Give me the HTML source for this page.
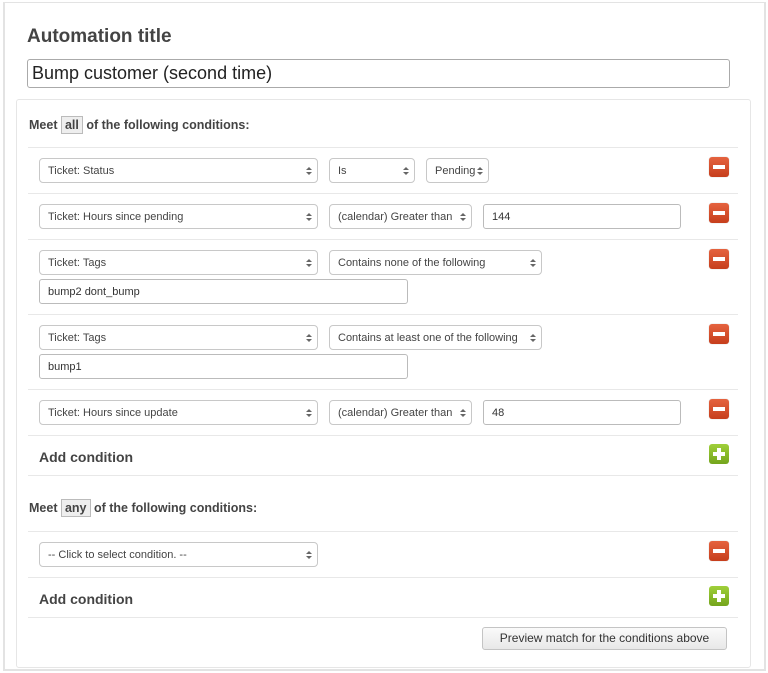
<!DOCTYPE html>
<html><head><style>
*{box-sizing:border-box;margin:0;padding:0}
body{width:768px;height:673px;background:#fff;position:relative;font-family:"Liberation Sans",Arial,sans-serif;color:#444;overflow:hidden}
.a{position:absolute}
.outer{left:3px;top:2px;width:763px;height:669px;border:2px solid #e3e3e3;border-top-width:1px}
.panel{left:16px;top:99px;width:735px;height:569px;border:1px solid #e6e6e6;border-radius:3px}
.ln{left:28px;width:710px;height:1px;background:#e8e8e8}
.sel{height:25px;border:1px solid #c8c8c8;border-radius:4px;font-size:11px;display:flex;align-items:center;padding-left:8px;padding-top:1px;color:#444;background:#fff;white-space:nowrap;overflow:hidden}
.sel:after{content:"";position:absolute;right:5px;top:8px;border:3px solid transparent;border-bottom:3px solid #666;border-top:0}
.sel:before{content:"";position:absolute;right:5px;top:13px;border:3px solid transparent;border-top:3px solid #666;border-bottom:0}
.inp{height:25px;border:1px solid #bbb;border-radius:3px;font-size:11px;display:flex;align-items:center;padding-left:8px;padding-top:1px;color:#333}
.minus{width:20px;height:20px;border-radius:3px;background:linear-gradient(#e5633f,#c63e1c);box-shadow:0 0 1px #bbb}
.minus:after{content:"";position:absolute;left:4px;top:8px;width:12px;height:4px;background:#fff}
.plus{width:20px;height:20px;border-radius:3px;background:linear-gradient(#9fcf3a,#74a51d)}
.plus:after{content:"";position:absolute;left:4px;top:8px;width:12px;height:4px;background:#fff}
.plus:before{content:"";position:absolute;left:8px;top:4px;width:4px;height:12px;background:#fff}
.b{font-weight:bold;font-size:12.5px;color:#444}
.tag{border:1px solid #bbb;background:#eee;padding:1px 3px}
.ac{font-weight:bold;font-size:14px;color:#444}
</style></head><body>
<div class="a outer"></div>
<div class="a" style="left:27px;top:26px;font-size:19px;font-weight:bold;color:#444">Automation title</div>
<div class="a" style="left:27px;top:59px;width:703px;height:29px;border:1px solid #aaa;border-radius:3px;font-size:18px;line-height:27px;padding-left:4px;color:#222">Bump customer (second time)</div>
<div class="a panel"></div>
<div class="a b" style="left:29px;top:116px;line-height:18px">Meet <span class="tag">all</span> of the following conditions:</div>
<div class="a ln" style="top:147px"></div>
<div class="a sel" style="left:39px;top:158px;width:279px">Ticket: Status</div>
<div class="a sel" style="left:329px;top:158px;width:86px">Is</div>
<div class="a sel" style="left:426px;top:158px;width:63px">Pending</div>
<div class="a minus" style="left:709px;top:157px"></div>
<div class="a ln" style="top:193px"></div>
<div class="a sel" style="left:39px;top:204px;width:279px">Ticket: Hours since pending</div>
<div class="a sel" style="left:329px;top:204px;width:143px">(calendar) Greater than</div>
<div class="a inp" style="left:483px;top:204px;width:198px">144</div>
<div class="a minus" style="left:709px;top:203px"></div>
<div class="a ln" style="top:239px"></div>
<div class="a sel" style="left:39px;top:250px;width:279px">Ticket: Tags</div>
<div class="a sel" style="left:329px;top:250px;width:213px">Contains none of the following</div>
<div class="a inp" style="left:39px;top:279px;width:369px">bump2 dont_bump</div>
<div class="a minus" style="left:709px;top:249px"></div>
<div class="a ln" style="top:314px"></div>
<div class="a sel" style="left:39px;top:325px;width:279px">Ticket: Tags</div>
<div class="a sel" style="left:329px;top:325px;width:213px">Contains at least one of the following</div>
<div class="a inp" style="left:39px;top:354px;width:369px">bump1</div>
<div class="a minus" style="left:709px;top:324px"></div>
<div class="a ln" style="top:389px"></div>
<div class="a sel" style="left:39px;top:400px;width:279px">Ticket: Hours since update</div>
<div class="a sel" style="left:329px;top:400px;width:143px">(calendar) Greater than</div>
<div class="a inp" style="left:483px;top:400px;width:198px">48</div>
<div class="a minus" style="left:709px;top:399px"></div>
<div class="a ln" style="top:435px"></div>
<div class="a ac" style="left:39px;top:449px">Add condition</div>
<div class="a plus" style="left:709px;top:444px"></div>
<div class="a ln" style="top:475px"></div>
<div class="a b" style="left:29px;top:499px;line-height:18px">Meet <span class="tag">any</span> of the following conditions:</div>
<div class="a ln" style="top:531px"></div>
<div class="a sel" style="left:39px;top:542px;width:279px">-- Click to select condition. --</div>
<div class="a minus" style="left:709px;top:541px"></div>
<div class="a ln" style="top:577px"></div>
<div class="a ac" style="left:39px;top:591px">Add condition</div>
<div class="a plus" style="left:709px;top:586px"></div>
<div class="a ln" style="top:617px"></div>
<div class="a" style="left:482px;top:627px;width:245px;height:23px;border:1px solid #c4c4c4;border-radius:3px;background:linear-gradient(#fafafa,#e8e8e8);font-size:12px;line-height:21px;text-align:center;color:#333">Preview match for the conditions above</div>
</body></html>
